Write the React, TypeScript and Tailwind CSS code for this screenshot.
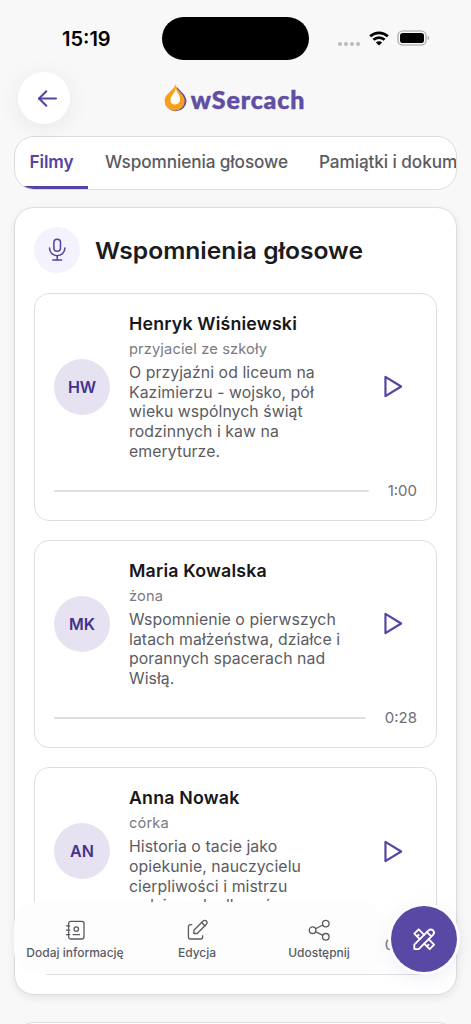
import {
  TbAddressBook,
  TbArrowLeft,
  TbEdit,
  TbMicrophone,
  TbPlayerPlay,
  TbShare,
  TbTools,
} from 'react-icons/tb';

interface Memory {
  initials: string;
  name: string;
  relation: string;
  lines: string[];
  duration: string;
}

const MEMORIES: Memory[] = [
  {
    initials: 'HW',
    name: 'Henryk Wiśniewski',
    relation: 'przyjaciel ze szkoły',
    lines: ['O przyjaźni od liceum na', 'Kazimierzu - wojsko, pół', 'wieku wspólnych świąt', 'rodzinnych i kaw na', 'emeryturze.'],
    duration: '1:00',
  },
  {
    initials: 'MK',
    name: 'Maria Kowalska',
    relation: 'żona',
    lines: ['Wspomnienie o pierwszych', 'latach małżeństwa, działce i', 'porannych spacerach nad', 'Wisłą.'],
    duration: '0:28',
  },
  {
    initials: 'AN',
    name: 'Anna Nowak',
    relation: 'córka',
    lines: ['Historia o tacie jako', 'opiekunie, nauczycielu', 'cierpliwości i mistrzu', 'rodzinnych albumów.'],
    duration: '0:32',
  },
];

function StatusBar() {
  return (
    <div className="flex h-[76px] items-center pl-[62px] pr-[41px]">
      <span className="w-[100px] pt-px text-[20px] font-semibold text-black">15:19</span>
      <div className="h-[43px] w-[147px] rounded-full bg-black" />
      <div className="ml-auto flex items-center">
        <div className="mr-[9px] mt-[11px] flex gap-[2px]">
          {[0, 1, 2, 3].map(i => (
            <span key={i} className="h-[4px] w-[4px] rounded-full bg-[#bcbcbe]" />
          ))}
        </div>
        <svg width="20" height="15" viewBox="0 0 20 15" fill="none" stroke="#000" strokeWidth="2.8">
          <path d="M1.2 5.3C6.2.7 13.8.7 18.8 5.3" />
          <path d="M4.4 8.8c3.2-2.9 8-2.9 11.2 0" />
          <path d="M10 14.6 6.9 11.5c1.8-1.6 4.4-1.6 6.2 0z" fill="#000" stroke="none" />
        </svg>
        <svg className="ml-[8px]" width="33" height="16" viewBox="0 0 33 16">
          <rect x="1" y="1" width="28" height="14" rx="4.6" fill="none" stroke="#9b9b9d" strokeWidth="1.1" />
          <rect x="3" y="3" width="24" height="10" rx="2.8" fill="#000" />
          <path d="M30.7 6v4c.8-.3 1.3-1.1 1.3-2s-.5-1.7-1.3-2z" fill="#9b9b9d" />
        </svg>
      </div>
    </div>
  );
}

function Flame() {
  return (
    <svg width="24" height="30" viewBox="0 0 24 30">
      <path d="M13 4c3 4 9.500 8 9.500 14.500A10.800 10.500 0 0 1 1.500 21z" fill="#5f4ea4" />
      <path d="M11 .500C12 7 .700 9.500.700 18a10 9.500 0 0 0 20 .300C20.700 10.500 12.500 8.500 11 .500z" fill="#f8a01c" />
      <path d="M11.700 4.500c.5 5-5.200 7.500-5.200 12.700 0 2.700 1.900 4.300 4.400 4.300 2.800 0 5.200-2.100 5.200-5.500C16.100 11.500 12.300 9.500 11.700 4.500z" fill="#fffdf7" />
    </svg>
  );
}

function MemoryCard({ memory }: { memory: Memory }) {
  return (
    <div className="rounded-[15px] border border-[#dedee2] bg-white p-[19px]">
      <div className="flex items-center">
        <div className="-mt-px flex h-[56px] w-[56px] shrink-0 items-center justify-center rounded-full bg-[#e6e2f2] text-[16px] font-semibold text-[#44318d]">
          {memory.initials}
        </div>
        <div className="ml-[19px] flex-1 whitespace-nowrap">
          <h3 className="text-[17.8px] leading-[22px] font-semibold tracking-[0.18px] text-[#17171a]">{memory.name}</h3>
          <p className="pt-px text-[14.7px] leading-[27px] tracking-[0.12px] text-[#7a7a80]">{memory.relation}</p>
          <div className="text-[15.8px] leading-[19.7px] tracking-[0.07px] text-[#5b5b61]">
            {memory.lines.map(l => <p key={l}>{l}</p>)}
          </div>
        </div>
        <button className="-mt-px mr-[11px] shrink-0 text-[#5643a3]">
          <TbPlayerPlay size={29} strokeWidth={1.8} />
        </button>
      </div>
      <div className="mt-[19px] flex h-[20px] items-center gap-[19px]">
        <div className="h-[2px] flex-1 rounded-full bg-[#dfdfe2]" />
        <span className="pt-px text-[15px] text-[#6e6e74]">{memory.duration}</span>
      </div>
    </div>
  );
}

export default function App() {
  return (
    <div className="relative h-[1024px] w-[471px] overflow-hidden bg-[#f8f8f8] font-['Inter',sans-serif]">
      <StatusBar />

      <header className="relative flex h-[60px] items-start justify-center">
        <button className="absolute left-[18px] top-[-4px] flex h-[52px] w-[52px] items-center justify-center rounded-full bg-white pl-[7px] text-[#5643a3] shadow-[0_4px_24px_rgba(0,0,0,0.07)]">
          <TbArrowLeft size={29} strokeWidth={1.7} />
        </button>
        <div className="flex items-start gap-[3px] pt-[7px] pr-[2px]">
          <Flame />
          <span className="font-['Lato',sans-serif] text-[25px] leading-[33px] font-black tracking-[0.85px] text-[#5f4ea4] [-webkit-text-stroke:0.5px_#5f4ea4]">wSercach</span>
        </div>
      </header>

      <nav className="mx-[14px] flex h-[54px] w-[443px] overflow-hidden rounded-[20px] border border-[#dcdce0] bg-white text-[17.2px] leading-[50px] whitespace-nowrap text-[#5b5b61]">
        <span className="h-full shrink-0 border-b-[3px] border-[#5643a3] px-[14.5px] font-semibold tracking-[-0.1px] text-[#5643a3]">Filmy</span>
        <span className="ml-[17px] shrink-0 font-medium tracking-[-0.09px]">Wspomnienia głosowe</span>
        <span className="ml-[31px] shrink-0 font-medium tracking-[-0.09px]">Pamiątki i dokumenty</span>
      </nav>

      <section className="mx-[14px] mt-[17px] h-[788px] w-[443px] rounded-[20px] border border-[#dcdce0] bg-white px-[19px] pt-[19px] shadow-[0_3px_8px_rgba(0,0,0,0.08)]">
        <div className="flex h-[46px] items-center">
          <div className="flex h-[46px] w-[46px] shrink-0 items-center justify-center rounded-full bg-[#f4f2fc] text-[#5643a3]">
            <TbMicrophone size={26.4} strokeWidth={1.4} />
          </div>
          <h2 className="ml-[15px] origin-left scale-x-[1.07] pt-[3px] text-[23px] font-semibold whitespace-nowrap text-[#1b1b1e]">Wspomnienia głosowe</h2>
        </div>
        <div className="mt-[20px] flex flex-col gap-[19.5px]">
          {MEMORIES.map(m => <MemoryCard key={m.name} memory={m} />)}
        </div>
      </section>

      <section className="mx-[14px] mt-[27px] h-[100px] w-[443px] rounded-[20px] border border-[#dcdce0] bg-white" />

      {/* Floating action bar */}
      <div className="absolute left-[14px] top-[902px] flex h-[72px] w-[370px] rounded-[24px] bg-[#fdfdfe] pt-[15px] text-[12px] font-medium text-[#5b5b61]">
        <button className="flex w-[122px] flex-col items-center gap-[1px]">
          <TbAddressBook size={26.4} strokeWidth={1.2} />
          <span>Dodaj informację</span>
        </button>
        <button className="flex w-[122px] flex-col items-center gap-[1px]">
          <TbEdit size={26.4} strokeWidth={1.2} />
          <span>Edycja</span>
        </button>
        <button className="flex w-[122px] flex-col items-center gap-[1px]">
          <TbShare size={26.4} strokeWidth={1.2} />
          <span>Udostępnij</span>
        </button>
      </div>
      <button className="absolute left-[391px] top-[906px] flex h-[66px] w-[66px] items-center justify-center rounded-full bg-[#5a48a5] text-white shadow-[0_0_0_3px_#fcfcfd,0_4px_20px_rgba(86,67,163,0.12)]">
        <TbTools size={26.4} strokeWidth={1.7} />
      </button>
    </div>
  );
}
